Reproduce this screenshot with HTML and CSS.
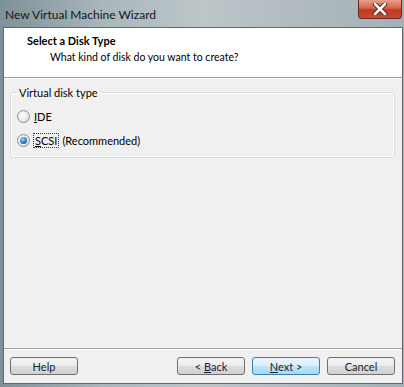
FILE: index.html
```html
<!DOCTYPE html>
<html>

<head>
    <title>New Virtual Machine Wizard</title>
    <meta name="viewport" content="width=device-width, initial-scale=1.0">
    <link rel="stylesheet" href="styles.css">
</head>

<body>
    <div class="window">
        <div class="titlebar">
            <span class="title">New Virtual Machine Wizard</span>
            <div class="close">
                <svg width="16" height="12" viewBox="0 0 16 12">
                    <path d="M3 1 L13 11 M13 1 L3 11" stroke="#4a1c14" stroke-width="4.5" stroke-linecap="round" />
                    <path d="M3 1 L13 11 M13 1 L3 11" stroke="#ffffff" stroke-width="2.6" stroke-linecap="round" />
                </svg>
            </div>
        </div>

        <div class="client">
            <div class="header">
                <div class="heading">Select a Disk Type</div>
                <div class="subheading">What kind of disk do you want to create?</div>
            </div>

            <div class="content">
                <fieldset class="group">
                    <legend>Virtual disk type</legend>
                    <div class="option">
                        <span class="radio"></span>
                        <span><u>I</u>DE</span>
                    </div>
                    <div class="option">
                        <span class="radio checked"></span>
                        <span class="focus"><u>S</u>CSI</span>
                        <span>(Recommended)</span>
                    </div>
                </fieldset>
            </div>

            <div class="footer">
                <button type="button" class="btn">Help</button>
                <div class="spacer"></div>
                <button type="button" class="btn">&lt; <u>B</u>ack</button>
                <button type="button" class="btn default"><u>N</u>ext &gt;</button>
                <button type="button" class="btn">Cancel</button>
            </div>
        </div>
    </div>
</body>

</html>
```

FILE: styles.css
```css
body {
    margin: 0;
    padding: 0;
    font-family: Lato, "Open Sans", sans-serif;
    font-size: 11px;
    color: #000;
    background-color: #1e3a44;
}

.window {
    width: 404px;
    height: 387px;
    display: flex;
    flex-direction: column;
    background: linear-gradient(90deg, #7d9198 0%, #a9b6ba 25%, #bcc6c9 50%, #aeb9bd 80%, #a3b0b5 100%);
}

.titlebar {
    height: 27px;
    display: flex;
    align-items: flex-start;
    justify-content: space-between;
}

.title {
    font-size: 12px;
    color: #101820;
    padding-left: 5px;
    padding-top: 7px;
}

.close {
    width: 44px;
    height: 19px;
    margin-right: 2px;
    display: flex;
    align-items: center;
    justify-content: center;
    box-sizing: border-box;
    border: 1px solid #6b2a20;
    border-top: none;
    border-radius: 0 0 4px 4px;
    background: linear-gradient(180deg, #e8a28f 0%, #d5634a 45%, #c13a22 55%, #c84a30 100%);
}

.client {
    flex: 1;
    display: flex;
    flex-direction: column;
    margin: 0 1px 3px 3px;
    border: 1px solid #5d6a70;
    background-color: #f0f0f0;
}

.header {
    height: 50px;
    background-color: #fff;
    border-bottom: 1px solid #a0a0a0;
    box-shadow: 0 1px 0 #fff;
    padding-top: 5px;
    box-sizing: border-box;
}

.heading {
    font-weight: bold;
    line-height: 16px;
    margin-left: 23px;
}

.subheading {
    margin-left: 46px;
    font-size: 10.5px;
    line-height: 16px;
}

.content {
    flex: 1;
    padding: 8px 7px 0 6px;
}

.group {
    margin: 0;
    padding: 5px 7px 5px 6px;
    border: 1px solid #d5dfe5;
    border-radius: 3px;
    box-shadow: inset 0 0 0 1px #fff;
}

legend {
    padding: 0 2px;
    margin-left: 0;
}

.option {
    display: flex;
    align-items: center;
    gap: 4px;
    height: 24px;
}

.radio {
    width: 11px;
    height: 11px;
    border: 1px solid #8e8f8f;
    border-radius: 50%;
    background: radial-gradient(circle at 40% 40%, #ffffff 0%, #e6e6e6 60%, #cfcfcf 100%);
    position: relative;
}

.radio.checked::after {
    content: "";
    position: absolute;
    left: 2px;
    top: 2px;
    width: 7px;
    height: 7px;
    border-radius: 50%;
    background: radial-gradient(circle at 40% 35%, #a8dcf8 0%, #2a8ad4 45%, #0d3f7a 100%);
}

.focus {
    outline: 1px dotted #333;
    outline-offset: 0;
    padding: 0 1px;
}

u {
    text-decoration-thickness: 1px;
}

.footer {
    display: flex;
    align-items: center;
    gap: 7px;
    height: 34px;
    padding: 0 7px 0 6px;
    border-top: 1px solid #a0a0a0;
    box-shadow: inset 0 1px 0 #fff;
}

.spacer {
    flex: 1;
}

.btn {
    width: 68px;
    height: 18px;
    padding: 0;
    font-family: Lato, "Open Sans", sans-serif;
    font-size: 11px;
    color: #1a1a30;
    border: 1px solid #707070;
    border-radius: 3px;
    background: linear-gradient(180deg, #f4f4f4 0%, #ebebeb 50%, #dddddd 51%, #d0d0d0 100%);
}

.btn.default {
    border-color: #3c7fb1;
    background: linear-gradient(180deg, #eaf6fd 0%, #d9f0fc 50%, #bee6fd 51%, #a7d9f5 100%);
}
```
